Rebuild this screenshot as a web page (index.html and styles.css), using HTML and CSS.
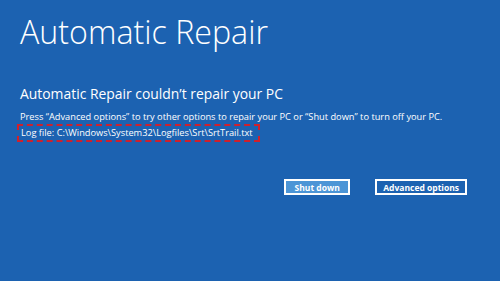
FILE: index.html
```html
<!DOCTYPE html>
<html lang="en">
<head>
    <meta charset="UTF-8">
    <title>Automatic Repair</title>
    <link rel="stylesheet" href="styles.css">
</head>
<body>
    <div class="screen">
        <h1 class="title">Automatic Repair</h1>
        <div class="message">
            <h2>Automatic Repair couldn’t repair your PC</h2>
            <p>Press “Advanced options” to try other options to repair your PC or “Shut down” to turn off your PC.</p>
            <p class="log">Log file: C:\Windows\System32\Logfiles\Srt\SrtTrail.txt</p>
        </div>
        <div class="actions">
            <button class="btn btn-primary">Shut down</button>
            <button class="btn">Advanced options</button>
        </div>
    </div>
</body>
</html>
```

FILE: styles.css
```css
* {
    margin: 0;
    padding: 0;
    box-sizing: border-box;
}

body {
    font-family: "Open Sans", "Noto Sans", sans-serif;
    background-color: #1c62b1;
    color: #fff;
    width: 500px;
    height: 281px;
    overflow: hidden;
}

.screen {
    padding: 12px 0 0 20px;
}

.title {
    font-size: 32.2px;
    font-weight: 300;
    line-height: 40px;
}

.message {
    margin-top: 33px;
}

.message h2 {
    font-size: 13.9px;
    font-weight: 400;
    line-height: 18px;
}

.message p {
    font-size: 9.25px;
    line-height: 13px;
    margin-top: 7px;
}

.message .log {
    width: fit-content;
    margin: 1px 0 0 -3px;
    padding: 0 5px 0 2px;
    line-height: 14px;
    border: 2px dashed #d0202c;
}

.actions {
    display: flex;
    justify-content: flex-end;
    gap: 25px;
    margin-top: 37px;
    padding-right: 33px;
}

.btn {
    font-family: inherit;
    font-size: 8.5px;
    font-weight: 700;
    color: #fff;
    background: transparent;
    border: 2px solid #fff;
    height: 16px;
    padding: 0 6px;
    white-space: nowrap;
}

.btn-primary {
    background-color: #4c95d6;
    width: 66px;
}
```
